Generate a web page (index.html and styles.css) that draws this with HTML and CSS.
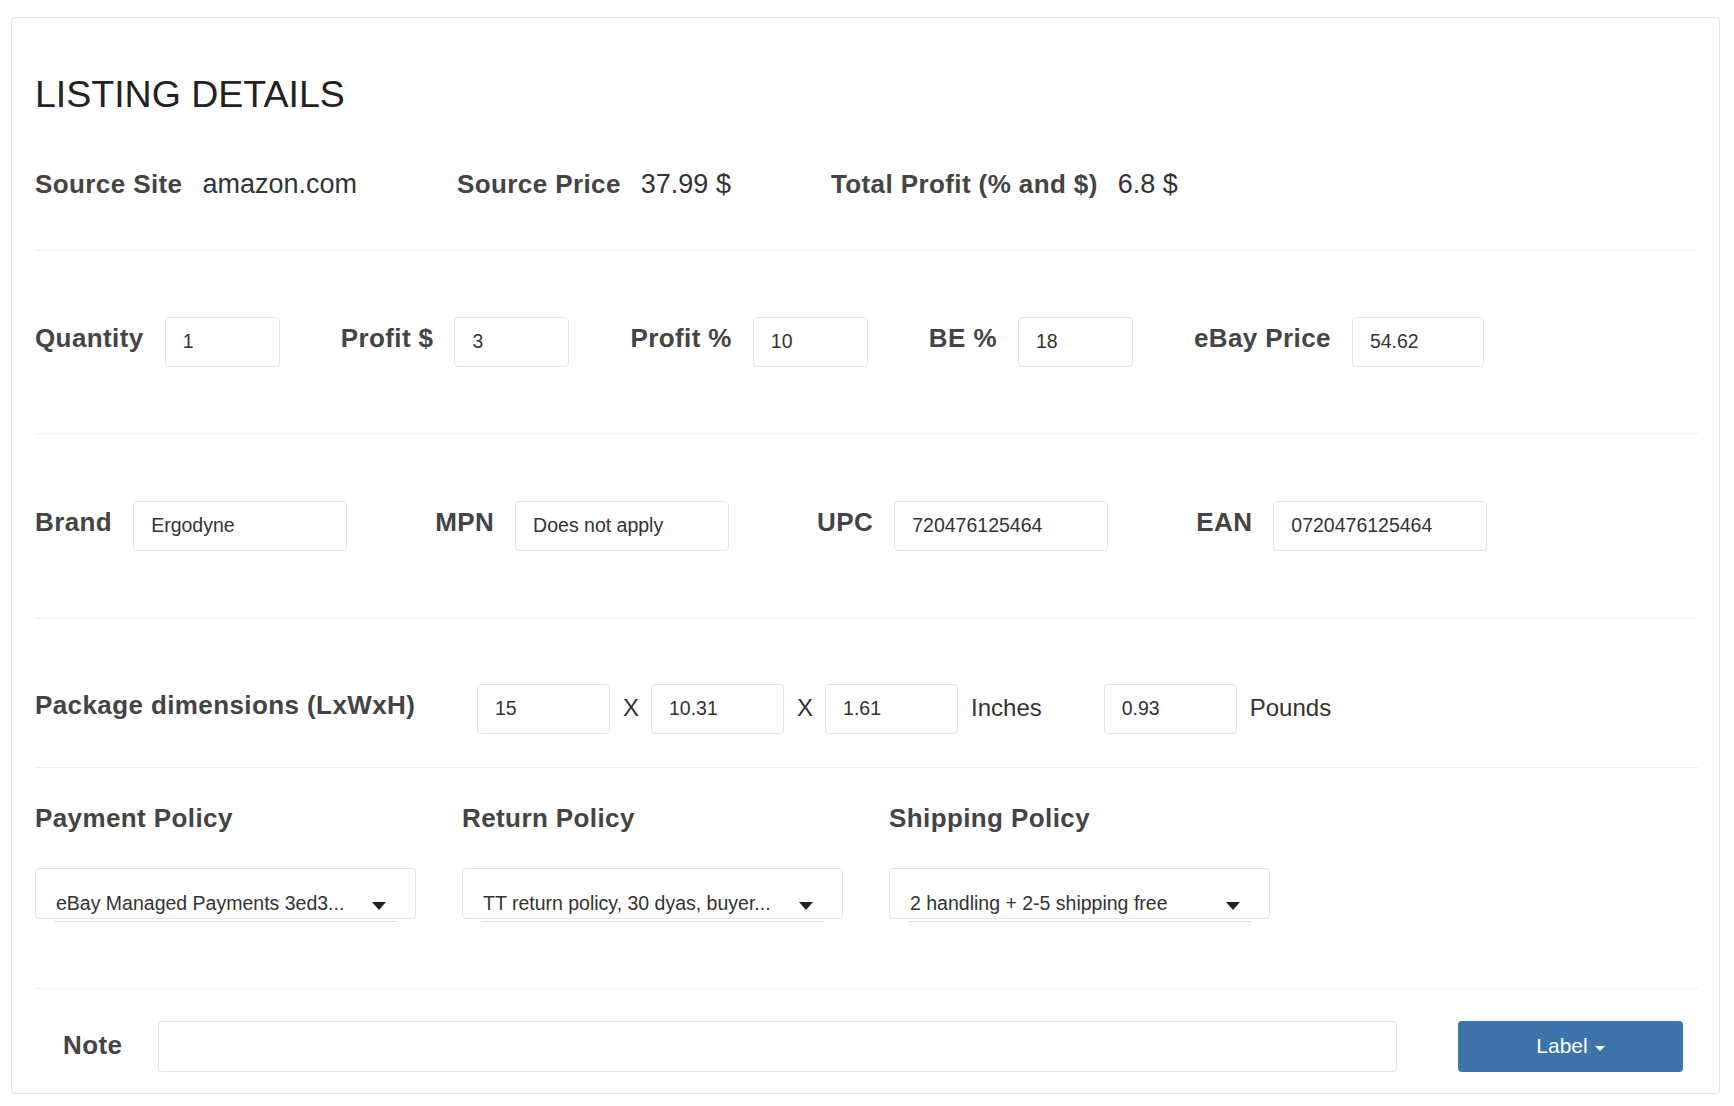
FILE: index.html
```html
<!DOCTYPE html>
<html lang="en">
<head>
  <meta charset="UTF-8"/>
  <meta name="viewport" content="width=device-width, initial-scale=1.0"/>
  <title>Listing Details</title>
  <link rel="stylesheet" href="styles.css">
</head>
<body>

  <div class="card">
    <h1 class="card-title">LISTING DETAILS</h1>

    <!-- Source info -->
    <div class="section summary">
      <div class="stat"><span class="label">Source Site</span><span class="value">amazon.com</span></div>
      <div class="stat"><span class="label">Source Price</span><span class="value">37.99 $</span></div>
      <div class="stat"><span class="label">Total Profit (% and $)</span><span class="value">6.8 $</span></div>
    </div>

    <!-- Pricing -->
    <div class="section pricing">
      <div class="field"><label class="label">Quantity</label><input class="input" type="text" value="1"></div>
      <div class="field"><label class="label">Profit $</label><input class="input" type="text" value="3"></div>
      <div class="field"><label class="label">Profit %</label><input class="input" type="text" value="10"></div>
      <div class="field"><label class="label">BE %</label><input class="input" type="text" value="18"></div>
      <div class="field"><label class="label">eBay Price</label><input class="input input-wide" type="text" value="54.62"></div>
    </div>

    <!-- Identifiers -->
    <div class="section ids">
      <div class="field"><label class="label">Brand</label><input class="input" type="text" value="Ergodyne"></div>
      <div class="field"><label class="label">MPN</label><input class="input" type="text" value="Does not apply"></div>
      <div class="field"><label class="label">UPC</label><input class="input" type="text" value="720476125464"></div>
      <div class="field"><label class="label">EAN</label><input class="input" type="text" value="0720476125464"></div>
    </div>

    <!-- Package -->
    <div class="section package">
      <label class="label package-label">Package dimensions (LxWxH)</label>
      <input class="input" type="text" value="15">
      <span class="unit sep">X</span>
      <input class="input" type="text" value="10.31">
      <span class="unit sep">X</span>
      <input class="input" type="text" value="1.61">
      <span class="unit">Inches</span>
      <input class="input weight" type="text" value="0.93">
      <span class="unit">Pounds</span>
    </div>

    <!-- Policies -->
    <div class="section policies">
      <div class="policy">
        <h3 class="label policy-title">Payment Policy</h3>
        <div class="select">
          <span class="select-text">eBay Managed Payments 3ed3...</span>
          <svg class="select-arrow" width="14" height="8" viewBox="0 0 14 8"><path d="M0 0H14L7 8Z" fill="#222"/></svg>
        </div>
        <div class="select-line"></div>
      </div>
      <div class="policy">
        <h3 class="label policy-title">Return Policy</h3>
        <div class="select">
          <span class="select-text">TT return policy, 30 dyas, buyer...</span>
          <svg class="select-arrow" width="14" height="8" viewBox="0 0 14 8"><path d="M0 0H14L7 8Z" fill="#222"/></svg>
        </div>
        <div class="select-line"></div>
      </div>
      <div class="policy">
        <h3 class="label policy-title">Shipping Policy</h3>
        <div class="select">
          <span class="select-text">2 handling + 2-5 shipping free</span>
          <svg class="select-arrow" width="14" height="8" viewBox="0 0 14 8"><path d="M0 0H14L7 8Z" fill="#222"/></svg>
        </div>
        <div class="select-line"></div>
      </div>
    </div>

    <!-- Note -->
    <div class="note-row">
      <label class="label note-label">Note</label>
      <input class="input note-input" type="text" value="">
      <button class="btn-label">Label <span class="caret"></span></button>
    </div>
  </div>

</body>
</html>
```

FILE: styles.css
```css
* {
  box-sizing: border-box;
  margin: 0;
  padding: 0;
}

body {
  font-family: "Liberation Sans", Arial, sans-serif;
  color: #333;
  background: #fff;
  padding: 17px 14px 12px 11px;
}

.card {
  border: 1px solid #dfe5ed;
  border-radius: 4px;
  padding: 58px 21px 21px 23px;
}

.card-title {
  font-size: 37.5px;
  line-height: 1;
  font-weight: 400;
  color: #222;
}

.label {
  font-size: 26px;
  line-height: 25px;
  font-weight: 700;
  letter-spacing: 0.4px;
  color: #444;
}

.section {
  display: flex;
  border-bottom: 1px solid #eceff3;
}

/* Source info row */
.summary {
  margin-top: 57px;
  padding-bottom: 52px;
  align-items: baseline;
  gap: 100px;
  line-height: 27px;
}

.stat {
  display: flex;
  align-items: baseline;
  gap: 20px;
}

.value {
  font-size: 27px;
  color: #333;
}

/* Inputs */
.input {
  font: inherit;
  font-size: 19.5px;
  color: #333;
  height: 50px;
  width: 115px;
  padding: 0 17px;
  border: 1px solid #dfe5ee;
  border-radius: 4px;
  background: #fff;
  outline: none;
}

.field {
  display: flex;
  align-items: center;
  gap: 21px;
}

.field .label {
  margin-bottom: 6px;
}

.pricing {
  padding: 66px 0;
  gap: 61px;
}

.input-wide {
  width: 132px;
}

.ids {
  padding: 67px 0;
  gap: 88px;
}

.ids .input {
  width: 214px;
}

/* Package row */
.package {
  padding: 65px 0 33px;
  align-items: center;
}

.package-label {
  width: 442px;
  margin-bottom: 6px;
}

.package .input {
  width: 133px;
}

.unit {
  font-size: 24px;
  color: #333;
  margin: 0 15px 2px 13px;
}

.unit.sep {
  margin: 0 12px 2px 13px;
}

.package .weight {
  margin-left: 47px;
}

/* Policies */
.policies {
  padding: 38px 0 66px;
  gap: 46px;
}

.policy {
  width: 381px;
}

.policy-title {
  margin-bottom: 37px;
}

.select {
  height: 51px;
  border: 1px solid #dfe5ee;
  border-radius: 4px;
  display: flex;
  align-items: flex-end;
  justify-content: space-between;
  padding: 0 29px 5px 20px;
}

.select-text {
  font-size: 19.5px;
  line-height: 20px;
  color: #333;
  white-space: nowrap;
}

.select-arrow {
  margin-bottom: 3px;
  flex-shrink: 0;
}

.select-line {
  height: 1px;
  background: #dcdfe3;
  margin: 2px 19px 0;
}

/* Note row */
.note-row {
  display: flex;
  align-items: center;
  padding: 32px 15px 0 28px;
}

.note-label {
  margin-right: 36px;
  margin-bottom: 2px;
}

.note-input {
  flex: 1;
  height: 51px;
}

.btn-label {
  font: inherit;
  font-size: 21px;
  color: #fff;
  background: #3c74ab;
  border: none;
  border-radius: 4px;
  width: 225px;
  height: 51px;
  margin-left: 61px;
  display: flex;
  align-items: center;
  justify-content: center;
  gap: 7px;
}

.caret {
  display: inline-block;
  border-top: 5px solid #fff;
  border-left: 5.5px solid transparent;
  border-right: 5.5px solid transparent;
  margin-top: 4px;
}
```
